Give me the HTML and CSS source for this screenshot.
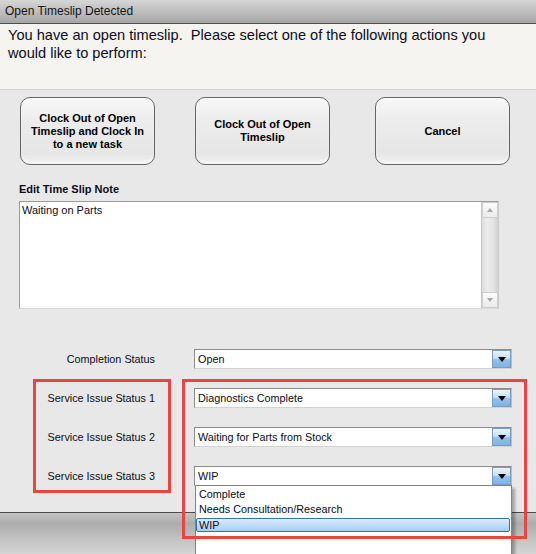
FILE: index.html
```html
<!DOCTYPE html>
<html lang="en">
<head>
    <meta charset="UTF-8">
    <title>Open Timeslip Detected</title>
    <link rel="stylesheet" href="styles.css">
</head>
<body>

    <div class="dialog">
        <div class="titlebar">Open Timeslip Detected</div>

        <div class="message">You have an open timeslip.&nbsp; Please select one of the following actions you would like to perform:</div>

        <div class="content">
            <div class="actions">
                <button class="action">Clock Out of Open Timeslip and Clock In to a new task</button>
                <button class="action">Clock Out of Open<br>Timeslip</button>
                <button class="action cancel">Cancel</button>
            </div>

            <div class="note">
                <div class="note-label">Edit Time Slip Note</div>
                <div class="note-box">
                    <div class="note-text">Waiting on Parts</div>
                    <div class="scrollbar">
                        <div class="scroll-btn"><span class="tri-up"></span></div>
                        <div class="scroll-track"></div>
                        <div class="scroll-btn"><span class="tri-down"></span></div>
                    </div>
                </div>
            </div>

            <div class="fields">
                <div class="field-label">Completion Status</div>
                <div class="combo"><span class="combo-value">Open</span><span class="combo-btn"><span class="tri-down dark"></span></span></div>

                <div class="field-label">Service Issue Status 1</div>
                <div class="combo"><span class="combo-value">Diagnostics Complete</span><span class="combo-btn"><span class="tri-down dark"></span></span></div>

                <div class="field-label">Service Issue Status 2</div>
                <div class="combo"><span class="combo-value">Waiting for Parts from Stock</span><span class="combo-btn"><span class="tri-down dark"></span></span></div>

                <div class="field-label">Service Issue Status 3</div>
                <div class="combo"><span class="combo-value">WIP</span><span class="combo-btn"><span class="tri-down dark"></span></span></div>
            </div>
        </div>

        <div class="backdrop"></div>

        <!-- open list of the third status combo -->
        <div class="dropdown">
            <div class="dropdown-item">Complete</div>
            <div class="dropdown-item">Needs Consultation/Research</div>
            <div class="dropdown-item selected">WIP</div>
        </div>

        <!-- highlight frames -->
        <div class="mark mark-labels"></div>
        <div class="mark mark-combos"></div>
    </div>

</body>
</html>
```

FILE: styles.css
```css
/* General */
body {
    margin: 0;
    font-family: "Liberation Sans", Arial, sans-serif;
    background: #d0d0d0;
    color: #0c0c1a;
}

.dialog {
    position: relative;
    width: 536px;
    height: 554px;
    overflow: hidden;
}

/* Title bar */
.titlebar {
    height: 23px;
    padding-left: 5px;
    border-bottom: 1px solid #4e4e4e;
    background: linear-gradient(#d6d6d6, #b9b9b9 60%, #a6a6a6);
    font-size: 12px;
    line-height: 23px;
    color: #141414;
}

/* Message */
.message {
    box-sizing: border-box;
    height: 66px;
    padding: 2px 38px 0 8px;
    background: #f5f4f0;
    border-bottom: 1px solid #d4d4d4;
    font-size: 14.6px;
    line-height: 18px;
}

/* Dialog body */
.content {
    box-sizing: border-box;
    height: 422px;
    padding-top: 7px;
    background: #e8e8e8;
}

.actions {
    display: flex;
    gap: 40px;
    padding: 0 26px 0 20px;
}

.action {
    width: 135px;
    height: 68px;
    padding: 0 8px;
    border: 1px solid #656565;
    border-radius: 10px;
    background: linear-gradient(#f8f8f8, #ececec 35%, #e6e6e6 85%, #f3f3f3);
    box-shadow: inset 0 1px 0 #ffffff, inset 0 -2px 2px #f6f6f6;
    font-family: "Liberation Sans", Arial, sans-serif;
    font-size: 11px;
    font-weight: bold;
    line-height: 13px;
    color: #000;
}

.cancel {
    margin-left: auto;
}

/* Note */
.note {
    margin-top: 17px;
    padding-left: 19px;
}

.note-label {
    font-size: 11px;
    font-weight: bold;
    line-height: 14px;
    margin-bottom: 5px;
}

.note-box {
    box-sizing: border-box;
    display: flex;
    width: 480px;
    height: 108px;
    background: #fff;
    border: 1px solid #9c9c9c;
    border-right-color: #c9c9c9;
    border-bottom-color: #dadada;
}

.note-text {
    flex: 1;
    padding: 1px 2px;
    font-size: 11px;
    line-height: 14px;
}

.scrollbar {
    display: flex;
    flex-direction: column;
    width: 16px;
    border-left: 1px solid #c9c9c9;
    background: #e2e2e2;
}

.scroll-btn {
    display: flex;
    align-items: center;
    justify-content: center;
    height: 16px;
    background: linear-gradient(#fbfbfb, #ebebeb);
    border: 1px solid #cfcfcf;
    box-sizing: border-box;
}

.scroll-track {
    flex: 1;
    background: linear-gradient(90deg, #dcdcdc, #ececec 30%, #e4e4e4 70%, #d2d2d2);
}

.tri-up,
.tri-down {
    width: 0;
    height: 0;
    border-left: 3px solid transparent;
    border-right: 3px solid transparent;
}

.tri-up {
    border-bottom: 4px solid #a7a7a7;
}

.tri-down {
    border-top: 4px solid #a7a7a7;
}

.tri-down.dark {
    border-left-width: 4px;
    border-right-width: 4px;
    border-top: 5px solid #000;
}

/* Status combos */
.fields {
    display: grid;
    grid-template-columns: 155px 318px;
    column-gap: 39px;
    row-gap: 19px;
    margin-top: 40px;
}

.field-label {
    align-self: center;
    text-align: right;
    font-size: 10.8px;
}

.combo {
    box-sizing: border-box;
    display: flex;
    align-items: center;
    height: 20px;
    background: #fff;
    border: 1px solid #8c8c8c;
    border-bottom-color: #d2d2d2;
    border-right-color: #bcbcbc;
}

.combo-value {
    flex: 1;
    padding-left: 3px;
    font-size: 10.8px;
}

.combo-btn {
    box-sizing: border-box;
    display: flex;
    align-items: center;
    justify-content: center;
    width: 19px;
    height: 18px;
    border: 1px solid #7d9bbf;
    background: linear-gradient(#eaf4fd, #c6e0f7 45%, #92c1ec 55%, #7fb3e6);
}

/* Window shadow under the dialog */
.backdrop {
    height: 42px;
    border-top: 1px solid #4a4a4a;
    background: linear-gradient(#c4c4c4, #acacac 25%, #c2c2c2 60%, #d6d6d6);
}

/* Open combo list */
.dropdown {
    position: absolute;
    left: 195px;
    top: 485px;
    width: 317px;
    height: 90px;
    box-sizing: border-box;
    padding-top: 1px;
    background: #fff;
    border: 1px solid #828282;
    box-shadow: 3px 3px 3px rgba(0, 0, 0, 0.3);
}

.dropdown-item {
    height: 15px;
    padding-left: 3px;
    font-size: 10.8px;
    line-height: 15px;
}

.dropdown-item.selected {
    box-sizing: border-box;
    height: 14px;
    margin: 1px 1px 0 0;
    padding-left: 2px;
    line-height: 12px;
    border: 1px solid #3c6ea8;
    border-radius: 2px;
    background: linear-gradient(#dcecfc, #c0dcf7 50%, #a7cdf2);
}

/* Highlight frames */
.mark {
    position: absolute;
    border: 3px solid #e8473f;
    box-sizing: border-box;
}

.mark-labels {
    left: 33px;
    top: 379px;
    width: 138px;
    height: 114px;
}

.mark-combos {
    left: 182px;
    top: 379px;
    width: 345px;
    height: 160px;
}
```
